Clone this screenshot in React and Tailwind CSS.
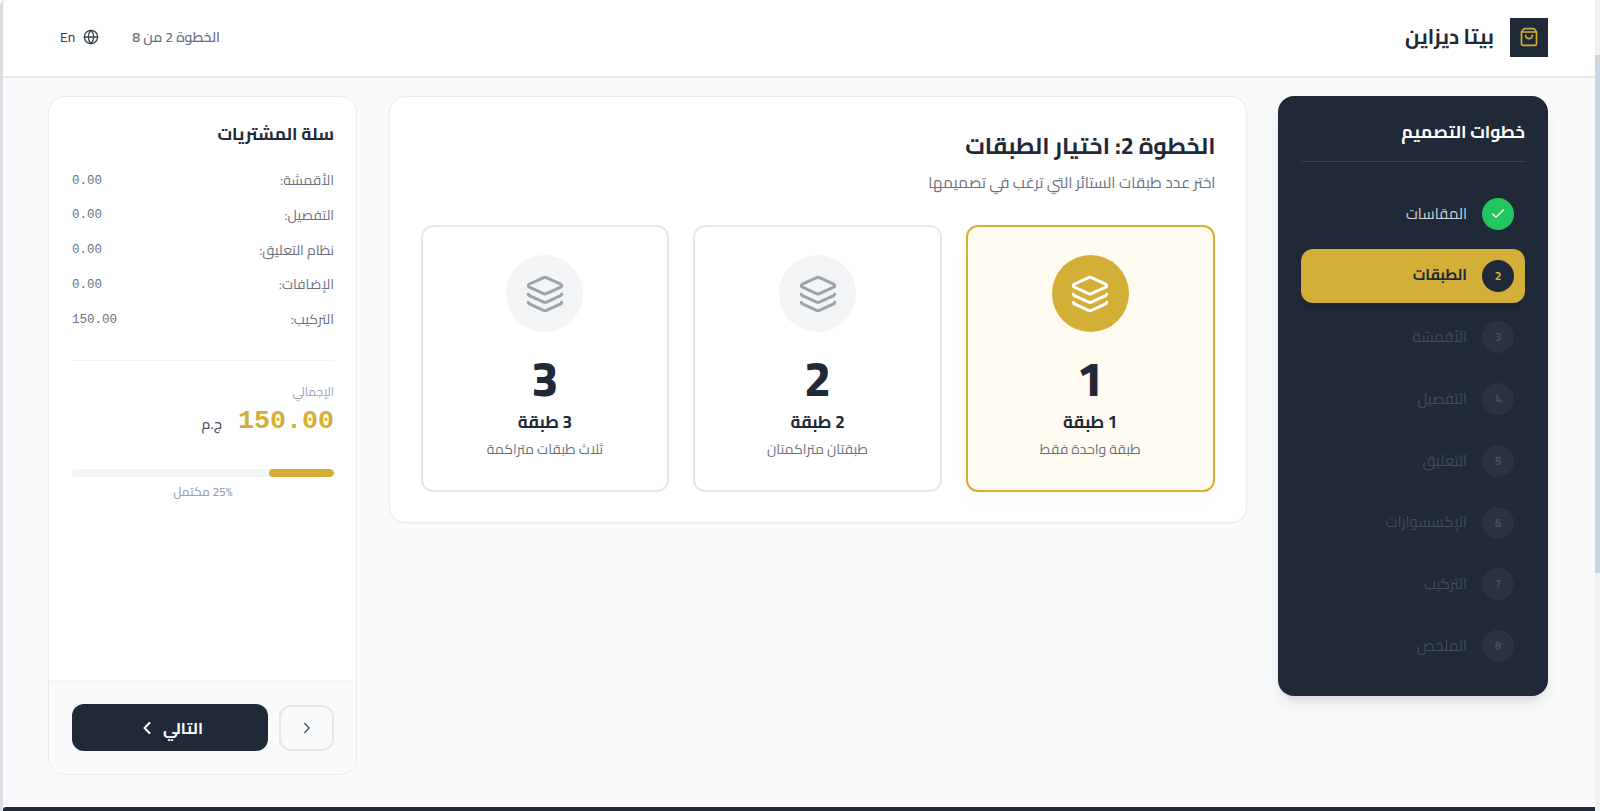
import { Check, ChevronLeft, ChevronRight, Globe, ShoppingBag } from "lucide-react";

function LayersIcon({ className }) {
  return (
    <svg viewBox="0 0 24 24" fill="none" stroke="currentColor" strokeWidth="1.8" strokeLinecap="round" strokeLinejoin="round" className={className}>
      <path d="M12.83 2.18a2 2 0 0 0-1.66 0L2.6 6.08a1 1 0 0 0 0 1.83l8.58 3.91a2 2 0 0 0 1.66 0l8.58-3.9a1 1 0 0 0 0-1.83z" />
      <path d="M2 12a1 1 0 0 0 .58.91l8.6 3.91a2 2 0 0 0 1.65 0l8.58-3.9A1 1 0 0 0 22 12" />
      <path d="M2 17a1 1 0 0 0 .58.91l8.6 3.91a2 2 0 0 0 1.65 0l8.58-3.9A1 1 0 0 0 22 17" />
    </svg>
  );
}

const steps = ["الأقمشة", "التفصيل", "التعليق", "الإكسسوارات", "التركيب", "الملخص"];
const rows = [
  ["الأقمشة:", "0.00"],
  ["التفصيل:", "0.00"],
  ["نظام التعليق:", "0.00"],
  ["الإضافات:", "0.00"],
  ["التركيب:", "150.00"],
];
const cards = [
  { n: 1, t: "1 طبقة", d: "طبقة واحدة فقط", on: true },
  { n: 2, t: "2 طبقة", d: "طبقتان متراكمتان" },
  { n: 3, t: "3 طبقة", d: "ثلاث طبقات متراكمة" },
];

export default function App() {
  return (
    <div dir="ltr" className="flex h-[811px] overflow-hidden bg-white font-['Cairo','Noto_Sans',sans-serif]">
      <div dir="rtl" className="flex min-w-0 flex-1 flex-col overflow-hidden rounded-tl-[6px] border-l-[3px] border-[#dcdee1] bg-[#f9fafb]">
        <header className="flex h-[78px] shrink-0 items-center justify-between border-b-2 border-[#e8eaed] bg-white pb-[2px] pl-[45px] pr-[47px]">
          <div className="flex items-center gap-4">
            <div className="flex h-[39px] w-[38px] items-center justify-center bg-[#1f2937]">
              <ShoppingBag size={20} strokeWidth={2} className="text-[#d4af37]" />
            </div>
            <span className="text-[20.5px] font-bold text-[#1f2937]">بيتا ديزاين</span>
          </div>
          <div className="flex items-center gap-[21px]">
            <span className="text-sm font-semibold text-[#6b7280]">الخطوة 2 من 8</span>
            <div className="flex items-center gap-2 px-3 text-[#374151]">
              <Globe size={16} strokeWidth={2} />
              <span className="text-sm font-medium">En</span>
            </div>
          </div>
        </header>

        <div className="flex min-h-0 flex-1 items-start gap-[31.5px] pl-[45px] pr-[47px] pt-[18px]">
          <aside className="h-[600px] w-[270px] shrink-0 rounded-2xl bg-[#1f2937] px-[23px] pt-6 shadow-[0_10px_15px_-3px_rgba(0,0,0,0.1),0_4px_6px_-4px_rgba(0,0,0,0.1)]">
            <div className="mb-[25px] h-[42px] border-b border-[#374151] text-[17.4px] font-bold leading-6 text-white">خطوات التصميم</div>
            <div className="flex flex-col gap-2">
              <div className="flex h-[53.75px] items-center gap-[15px] pl-3 pr-[11px]">
                <span className="flex h-8 w-8 items-center justify-center rounded-full bg-[#22c55e] text-white"><Check size={16} /></span>
                <span className="text-[15px] text-[#d1d5db]">المقاسات</span>
              </div>
              <div className="flex h-[53.75px] items-center gap-[15px] rounded-xl bg-[#d4af37] pl-3 pr-[11px] shadow-md">
                <span className="flex h-8 w-8 items-center justify-center rounded-full bg-[#1f2937] text-xs font-bold text-[#d4af37]">2</span>
                <span className="text-[15px] font-bold text-[#1f2937]">الطبقات</span>
              </div>
              {steps.map((s, i) => (
                <div key={s} className="flex h-[53.75px] items-center gap-[15px] pl-3 pr-[11px]">
                  <span className="flex h-8 w-8 items-center justify-center rounded-full bg-[#2a3340] text-xs font-bold text-[#454e5b]">{i + 3}</span>
                  <span className="text-[15px] text-[#424c5a]">{s}</span>
                </div>
              ))}
            </div>
          </aside>

          <main className="min-w-0 flex-1 rounded-2xl border border-[#e9ebee] bg-white px-[31px] pb-[30px] pt-[33px] shadow-[0_1px_2px_rgba(0,0,0,0.03)]">
            <h1 className="-mr-px text-[23.25px] font-bold leading-8 text-[#1f2937]">الخطوة 2: اختيار الطبقات</h1>
            <p className="-mr-px mb-[30px] mt-[9px] text-[15.5px] leading-6 text-[#6b7280]">اختر عدد طبقات الستائر التي ترغب في تصميمها</p>
            <div className="grid grid-cols-3 gap-6">
              {cards.map((c) => (
                <div key={c.n} className={c.on ? "flex h-[267px] flex-col items-center rounded-xl border-2 border-[#d4af37] bg-[#fffbf0] pt-7 shadow-lg shadow-[#d4af37]/5" : "flex h-[267px] flex-col items-center rounded-xl border-2 border-[#e5e7eb] bg-white pt-7"}>
                  <div className={c.on ? "flex h-[77px] w-[77px] items-center justify-center rounded-full bg-[#d4af37] text-white" : "flex h-[77px] w-[77px] items-center justify-center rounded-full bg-[#f3f4f6] text-[#9ca3af]"}>
                    <LayersIcon className="h-10 w-10" />
                  </div>
                  <div className="mt-[17px] text-5xl font-extrabold leading-[59px] text-[#1f2937]">{c.n}</div>
                  <div className="text-[17px] font-bold leading-7 text-[#1f2937]">{c.t}</div>
                  <div className="text-sm leading-[27px] text-[#6b7280]">{c.d}</div>
                </div>
              ))}
            </div>
          </main>

          <aside className="flex h-[679px] w-[309px] shrink-0 flex-col overflow-hidden rounded-2xl border border-[#e9ebee] bg-white">
            <div className="flex-1 pl-[23px] pr-[22px] pt-[23px]">
              <h2 className="text-[17.4px] font-bold leading-7 text-[#1f2937]">سلة المشتريات</h2>
              <div className="mt-5 flex flex-col gap-[10.75px] border-b border-[#f3f4f6] pb-[29px]">
                {rows.map(([a, b]) => (
                  <div key={a} className="flex h-6 items-center justify-between">
                    <span className="text-sm text-[#6b7280]">{a}</span>
                    <span className="pt-[2px] font-['Liberation_Mono',monospace] text-[12.5px] text-[#6b7280]">{b}</span>
                  </div>
                ))}
              </div>
              <div className="mt-[23px] text-xs text-[#9ca3af]">الإجمالي</div>
              <div className="mt-[3px] flex items-baseline gap-4">
                <span className="font-['Liberation_Mono',monospace] text-[26.7px] font-bold leading-9 text-[#d4af37]">150.00</span>
                <span className="relative top-px text-sm font-semibold text-[#4b5563]">ج.م</span>
              </div>
              <div className="mt-[30px] h-2 overflow-hidden rounded-full bg-[#f3f4f6]">
                <div className="h-full w-1/4 rounded-full bg-[#d4af37]"></div>
              </div>
              <div className="mt-[7px] text-center text-xs font-semibold text-[#9ca3af]">25% مكتمل</div>
            </div>
            <div className="flex h-[94px] shrink-0 items-center gap-[11px] border-t border-[#f3f4f6] bg-[#f9fafb] pl-[23px] pr-[22px]">
              <button className="flex h-[46px] w-[55px] shrink-0 items-center justify-center rounded-xl border-2 border-[#e5e7eb] text-[#4b5563]"><ChevronRight size={18} /></button>
              <button className="flex h-[47px] flex-1 items-center justify-center gap-[6px] rounded-xl bg-[#1f2937] font-bold text-white">التالي <ChevronLeft size={20} strokeWidth={2.5} /></button>
            </div>
          </aside>
        </div>
        <div className="h-[4px] shrink-0 rounded-tl-[3px] bg-[#1f2937]"></div>
      </div>
      <div className="w-[5px] shrink-0 bg-[#f1f1f1] pt-[55px]">
        <div className="h-[518px] bg-[#cbd5e1]"></div>
      </div>
    </div>
  );
}
